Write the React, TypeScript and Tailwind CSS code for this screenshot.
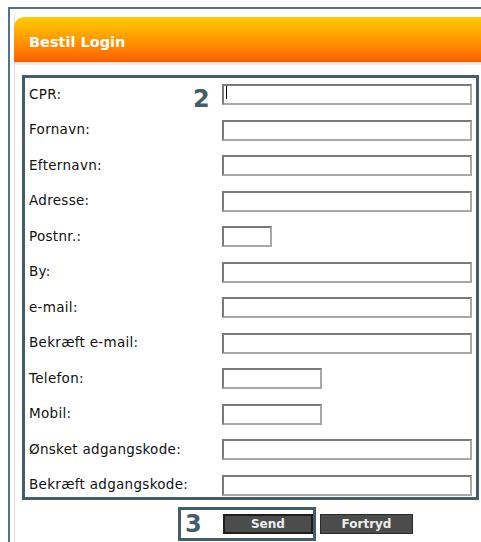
import React from 'react'

type Field = {
  label: string
  width: string
}

const fields: Field[] = [
  { label: 'CPR:', width: 'w-[250px]' },
  { label: 'Fornavn:', width: 'w-[250px]' },
  { label: 'Efternavn:', width: 'w-[250px]' },
  { label: 'Adresse:', width: 'w-[250px]' },
  { label: 'Postnr.:', width: 'w-[50px]' },
  { label: 'By:', width: 'w-[250px]' },
  { label: 'e-mail:', width: 'w-[250px]' },
  { label: 'Bekræft e-mail:', width: 'w-[250px]' },
  { label: 'Telefon:', width: 'w-[100px]' },
  { label: 'Mobil:', width: 'w-[100px]' },
  { label: 'Ønsket adgangskode:', width: 'w-[250px]' },
  { label: 'Bekræft adgangskode:', width: 'w-[250px]' },
]

function Row({ field, first }: { field: Field; first: boolean }) {
  return (
    <div className="flex items-center h-[21px]">
      <label className="w-[193px] text-[13.5px] tracking-[0.3px] text-[#111] leading-none pt-[2px]">{field.label}</label>
      <div className="relative">
        <input
          type="text"
          className={`${field.width} h-[21px] bg-white border-2 border-t-[#7a7a7a] border-l-[#7a7a7a] border-r-[#a8a8a8] border-b-[#a8a8a8] outline-none px-1 text-[12px]`}
        />
        {first && <span className="absolute left-[4px] top-[4px] w-px h-[13px] bg-black" />}
      </div>
    </div>
  )
}

export default function App() {
  return (
    <div className="w-[481px] h-[542px] overflow-hidden bg-white font-['DejaVu_Sans',Verdana,sans-serif]">
      <div className="ml-[8px] mt-[7px] border-l-2 border-t-2 border-[#58717e] pl-[4px] pt-[8px] h-[600px]">
        <div className="border-l border-[#dcdcdc] h-full">
          {/* orange title bar */}
          <div className="-ml-px h-[45px] rounded-tl-[10px] bg-gradient-to-b from-[#ffcb00] via-[#ff9a00] to-[#ff6000] border-b border-[#f05a00] flex items-center pl-[15px] pt-[8px]">
            <h1 className="text-white font-bold text-[14.5px]">Bestil Login</h1>
          </div>
          <div className="h-[3px] bg-[#ececec]" />

          <div className="pl-[7px] pt-[10px]">
            <div className="relative w-[457px] border-[3px] border-[#435d6b] pl-[4px] pt-[5px] pb-[2px] flex flex-col gap-[14.5px]">
              {fields.map((f, i) => (
                <Row key={f.label} field={f} first={i === 0} />
              ))}
              <span className="absolute left-[168px] top-[9px] text-[24px] font-bold text-[#435d6b] leading-none">2</span>
            </div>

            <div className="flex items-center mt-[7px] ml-[156px]">
              <div className="flex items-center w-[138px] h-[34px] border-[3px] border-[#435d6b] pl-[4px]">
                <span className="text-[24px] font-bold text-[#435d6b] leading-none w-[38px]">3</span>
                <button className="w-[91px] h-[20px] bg-[#4c4c4c] border-2 border-[#1e1e1e] text-[#ececec] font-bold text-[12px] leading-none">
                  Send
                </button>
              </div>
              <button className="ml-[4px] w-[93px] h-[20px] bg-[#4c4c4c] border border-[#2a2a2a] text-[#ececec] font-bold text-[12px] leading-none">
                Fortryd
              </button>
            </div>
          </div>
        </div>
      </div>
    </div>
  )
}
